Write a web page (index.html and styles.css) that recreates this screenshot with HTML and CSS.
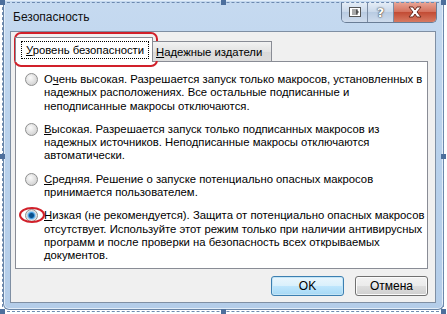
FILE: index.html
```html
<!DOCTYPE html>
<html lang="ru">
  <head>
    <meta charset="UTF-8" />
    <title>Безопасность</title>
    <link rel="stylesheet" href="styles.css">
  </head>
  <body>
    <div class="stage">
      <div class="window">
        <div class="titlebar">
          <span class="title">Безопасность</span>
          <div class="caption-btns">
            <div class="cbtn">
              <svg width="14" height="12" viewBox="0 0 14 12">
                <rect x="1.5" y="1.5" width="11" height="9" fill="#fff" stroke="#555" />
                <path d="M4 4h6M4 6h6M4 8h6" stroke="#555" />
                <path d="M8 3l3 3-3 3z" fill="#555" />
              </svg>
            </div>
            <div class="cbtn">?</div>
            <div class="cbtn close">
              <svg width="16" height="12" viewBox="0 0 16 12">
                <path d="M2 1h4l2 3 2-3h4l-4 5 4 5h-4l-2-3-2 3H2l4-5z" fill="#fff" stroke="#6b2a1e" stroke-width="1" />
              </svg>
            </div>
          </div>
        </div>

        <div class="client">
          <div class="tabs">
            <div class="tab active"><span class="focus"><u>У</u>ровень безопасности</span></div>
            <div class="tab"><u>Н</u>адежные издатели</div>
          </div>

          <div class="panel">
            <div class="option">
              <span class="radio"></span>
              <p>О<u>ч</u>ень высокая. Разрешается запуск только макросов, установленных в<br>надежных расположениях. Все остальные подписанные и<br>неподписанные макросы отключаются.</p>
            </div>
            <div class="option">
              <span class="radio"></span>
              <p><u>В</u>ысокая. Разрешается запуск только подписанных макросов из<br>надежных источников. Неподписанные макросы отключаются<br>автоматически.</p>
            </div>
            <div class="option">
              <span class="radio"></span>
              <p><u>С</u>редняя. Решение о запуске потенциально опасных макросов<br>принимается пользователем.</p>
            </div>
            <div class="option">
              <span class="radio checked"></span>
              <p><u>Н</u>изкая (не рекомендуется). Защита от потенциально опасных макросов<br>отсутствует. Используйте этот режим только при наличии антивирусных<br>программ и после проверки на безопасность всех открываемых<br>документов.</p>
              <span class="mark-ring"></span>
            </div>
          </div>

          <div class="buttons">
            <div class="btn default">OK</div>
            <div class="btn">Отмена</div>
          </div>
        </div>
      </div>

      <div class="mark-tab"></div>

      <div class="selection">
        <span class="handle h-tl"></span>
        <span class="handle h-tm"></span>
        <span class="handle h-tr"></span>
        <span class="handle h-ml"></span>
        <span class="handle h-mr"></span>
        <span class="handle h-bl"></span>
        <span class="handle h-bm"></span>
        <span class="handle h-br"></span>
      </div>
    </div>
  </body>
</html>
```

FILE: styles.css
```css
body {
  margin: 0;
  background: #fff;
  font: 11.3px "Liberation Sans", Arial, sans-serif;
  color: #000;
}
.stage {
  position: relative;
  width: 447px;
  height: 314px;
  overflow: hidden;
  background: #fff;
}
.window {
  margin: 0 3px;
  height: 310px;
  box-sizing: border-box;
  padding: 0 7px 6px 6px;
  display: flex;
  flex-direction: column;
  background: linear-gradient(#c6daf0, #bad2ec 40%, #b4cde9);
  border: 1px solid #6a86a8;
  border-top: none;
  border-radius: 0 0 6px 6px;
  box-shadow: inset 0 0 0 1px #e2edf8;
}
.titlebar {
  height: 31px;
  display: flex;
  justify-content: space-between;
  flex-shrink: 0;
}
.title {
  padding: 10px 0 0 3px;
  font-size: 12px;
  color: #111;
}
.caption-btns {
  display: flex;
  height: 20px;
  margin-top: 2px;
  margin-right: -1px;
  border: 1px solid #6a7d96;
  border-top: none;
  border-radius: 0 0 5px 5px;
  overflow: hidden;
}
.cbtn {
  width: 25px;
  display: flex;
  align-items: center;
  justify-content: center;
  background: linear-gradient(#e6eef7, #c9d8ea 50%, #b8cbe2 51%, #cfdced);
  border-right: 1px solid #7b8ca3;
  font: bold 13px "DejaVu Sans", sans-serif;
  color: #fff;
  text-shadow: 0 0 2px #333, 0 0 1px #333;
}
.cbtn.close {
  width: 42px;
  border-right: none;
  background: linear-gradient(#e9a899, #d4705c 50%, #c24b34 51%, #d77a62);
}
.client {
  flex: 1;
  min-height: 0;
  display: flex;
  flex-direction: column;
  background: #f0f0f0;
  border: 1px solid #7f8fa3;
  padding: 4px 7px 0 4px;
}
.tabs {
  display: flex;
  align-items: flex-end;
  height: 25px;
  flex-shrink: 0;
  position: relative;
  z-index: 1;
  white-space: nowrap;
}
.tab {
  height: 19px;
  padding: 0 9px 0 3px;
  display: flex;
  align-items: center;
  border: 1px solid #898c95;
  border-bottom: none;
  border-left: none;
  background: linear-gradient(#f2f2f2, #e3e3e3 50%, #d9d9d9 51%, #dddddd);
  color: #000;
}
.tab.active {
  height: 24px;
  width: 124px;
  background: #fff;
  border-left: 1px solid #898c95;
  margin-bottom: -1px;
  padding: 0 4px 0 8px;
}
.focus {
  outline: 1px dotted #000;
  outline-offset: 2px;
  padding: 0 2px;
}
.panel {
  height: 208px;
  flex-shrink: 0;
  background: #fff;
  border: 1px solid #898c95;
  padding: 11px 0 0 9px;
  box-sizing: border-box;
  white-space: nowrap;
  overflow: hidden;
}
.option {
  position: relative;
  display: flex;
  gap: 6px;
  margin-bottom: 10px;
}
.option p {
  margin: 0;
  line-height: 13.3px;
}
.radio {
  flex-shrink: 0;
  width: 11px;
  height: 11px;
  border-radius: 50%;
  border: 1px solid #8e8f8f;
  background: radial-gradient(circle at 40% 35%, #fbfbfb, #d6d6d6 70%, #c6c6c6);
}
.radio.checked {
  background: radial-gradient(circle, #0b4f8a 0 2px, #3e9ae0 3px, #a6d0ef 4px, #e2e2e2 5px, #f4f4f4);
}
.mark-ring {
  position: absolute;
  left: -6px;
  top: -2px;
  width: 22px;
  height: 12px;
  border: 2px solid #d1202a;
  border-radius: 50%;
}
.buttons {
  display: flex;
  justify-content: flex-end;
  gap: 11px;
  margin: 7px 0 0;
  font-size: 12px;
}
.btn {
  width: 71px;
  height: 18px;
  display: flex;
  align-items: center;
  justify-content: center;
  border: 1px solid #707070;
  border-radius: 3px;
  background: linear-gradient(#f2f2f2, #ebebeb 50%, #dddddd 51%, #cfcfcf);
  box-shadow: inset 0 0 0 1px #fbfbfb;
}
.btn.default {
  border-color: #3c7fb1;
  background: linear-gradient(#eaf6fd, #d9f0fc 50%, #bee6fd 51%, #a7d9f5);
  box-shadow: inset 0 0 0 1px #c4e5f6;
}
.mark-tab {
  position: absolute;
  left: 14px;
  top: 32px;
  width: 140px;
  height: 31px;
  border: 2px solid #d1202a;
  border-radius: 7px;
}
.selection {
  position: absolute;
  left: 2px;
  top: 2px;
  width: 440px;
  height: 308px;
  border: 1px dashed #6d8ab0;
}
.handle {
  position: absolute;
  width: 5px;
  height: 5px;
  background: #4d6f9c;
}
.h-tl { left: -3px; top: -3px; }
.h-tm { left: 218px; top: -3px; }
.h-tr { right: -3px; top: -3px; }
.h-ml { left: -3px; top: 151px; }
.h-mr { right: -3px; top: 151px; }
.h-bl { left: -3px; bottom: -3px; }
.h-bm { left: 218px; bottom: -3px; }
.h-br { right: -3px; bottom: -3px; }
```
